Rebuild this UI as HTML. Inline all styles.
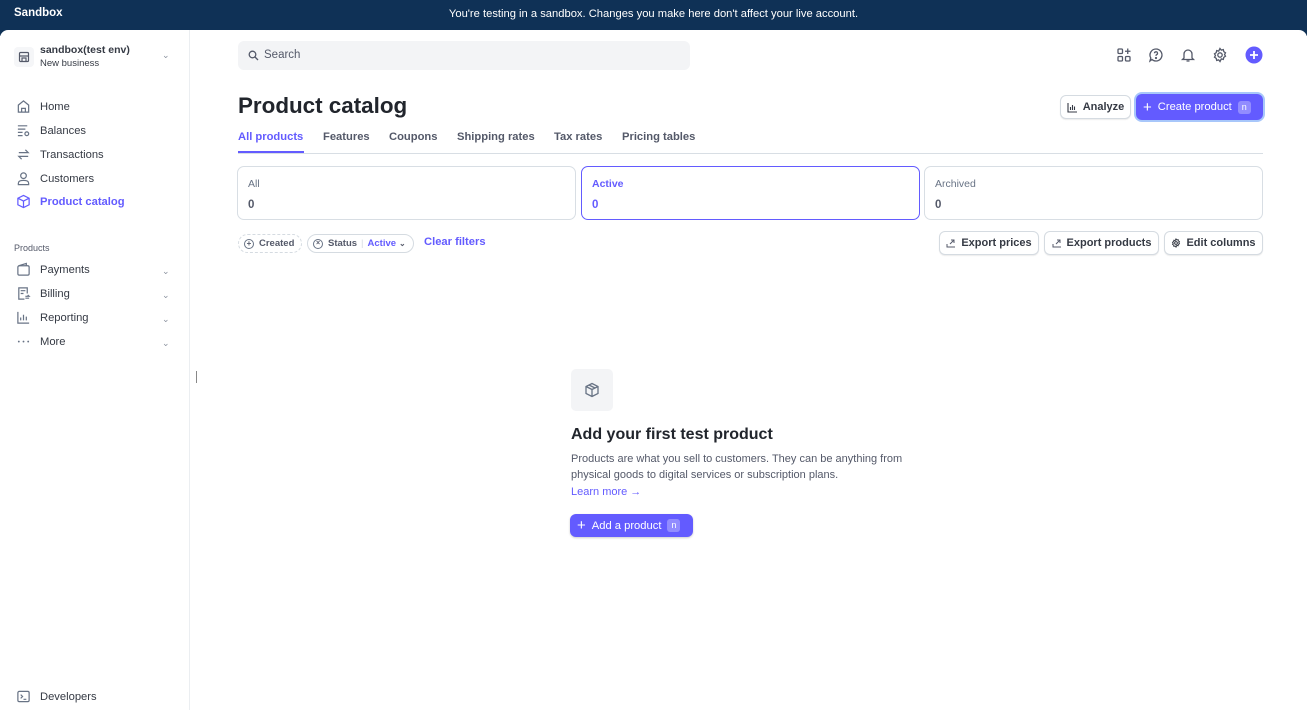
<!DOCTYPE html>
<html><head><meta charset="utf-8"><style>
*{box-sizing:border-box;margin:0;padding:0}
body{width:1307px;height:710px;overflow:hidden;font-family:"Liberation Sans",sans-serif;background:#fff;color:#353a44;position:relative;font-size:11px}
.top{position:absolute;left:0;top:0;width:1307px;height:36px;background:#0f3156}
.top .t{position:absolute;left:14px;top:7px;color:#fff;font-weight:bold;font-size:11.5px}
.top .m{position:absolute;left:0;width:1307px;top:8px;text-align:center;color:#fff;font-size:11.2px}
.main{position:absolute;left:0;top:30px;width:1307px;height:680px;background:#fff;border-radius:8px 8px 0 0}
.side{position:absolute;left:0;top:30px;width:190px;height:680px;border-right:1px solid #ebeef1}
.abs{position:absolute;white-space:nowrap}
.nav{position:absolute;left:16px;display:flex;align-items:center;font-size:11.2px;color:#353a44}
.nav svg{width:15px;height:15px;margin-right:9px;flex-shrink:0}
.chev{position:absolute;left:162px;color:#8a919e;font-size:9px}
.btn{position:absolute;height:24px;border:1px solid #d5dbe1;border-radius:6px;background:#fff;font-weight:bold;font-size:11px;display:flex;align-items:center;justify-content:center;white-space:nowrap;box-shadow:0 1px 1px rgba(0,0,0,.08);color:#353a44}
.btn svg{flex-shrink:0}
.card{position:absolute;top:166px;height:54px;border:1px solid #d8dee4;border-radius:7px;padding:11px 10px}
.card .l{font-size:10.5px;color:#687385}.card .v{font-size:11.5px;font-weight:bold;margin-top:9px;color:#545969}
.tab{position:absolute;top:131px;font-size:11.2px;font-weight:bold;color:#545969;white-space:nowrap}
.kbd{display:inline-block;width:13px;height:13px;border-radius:3px;background:rgba(255,255,255,.3);font-size:9px;text-align:center;line-height:13px;margin-left:6px}
</style></head><body>
<div class="top"><div class="t">Sandbox</div><div class="m">You're testing in a sandbox. Changes you make here don't affect your live account.</div></div>
<div class="main"></div>
<div class="side"></div>
<div class="abs" style="left:14px;top:47px;width:20px;height:20px;background:#f5f6f8;border-radius:4px"></div>
<svg class="abs" style="left:18px;top:51px" width="12" height="12" viewBox="0 0 12 12" fill="none" stroke="#545969" stroke-width="1.2"><rect x="1.5" y="1.5" width="9" height="9" rx="1"/><path d="M1.5 5h9M4 10V7h4v3"/></svg>
<div class="abs" style="left:40px;top:44px;font-size:10.5px;font-weight:bold">sandbox(test env)</div>
<div class="abs" style="left:40px;top:58px;font-size:9.5px">New business</div>
<div class="chev" style="top:50px">&#8964;</div>

<div class="nav" style="top:99px"><svg viewBox="0 0 16 16" fill="none" stroke="#687385" stroke-width="1.3"><path d="M2.5 14V6.5L8 2l5.5 4.5V14zM6 14v-4h4v4"/></svg>Home</div>
<div class="nav" style="top:123px"><svg viewBox="0 0 16 16" fill="none" stroke="#687385" stroke-width="1.3"><path d="M2 3h10M2 6.5h8M2 10h5M2 13.5h5"/><circle cx="11.5" cy="11.5" r="2"/></svg>Balances</div>
<div class="nav" style="top:147px"><svg viewBox="0 0 16 16" fill="none" stroke="#687385" stroke-width="1.3"><path d="M3 6h10l-3-3M13 10H3l3 3"/></svg>Transactions</div>
<div class="nav" style="top:171px"><svg viewBox="0 0 16 16" fill="none" stroke="#687385" stroke-width="1.3"><circle cx="8" cy="5" r="3"/><path d="M2.5 14.5v-1.5c0-2 2-3 5.5-3s5.5 1 5.5 3v1.5z"/></svg>Customers</div>
<div class="nav" style="top:194px;color:#635bff;font-weight:bold"><svg viewBox="0 0 16 16" fill="none" stroke="#635bff" stroke-width="1.3"><path d="M8 1.5l6 3v7l-6 3-6-3v-7zM2 4.5l6 3 6-3M8 7.5v7"/></svg>Product catalog</div>
<div class="abs" style="left:14px;top:243px;font-size:9px;color:#545969">Products</div>
<div class="nav" style="top:262px"><svg viewBox="0 0 16 16" fill="none" stroke="#687385" stroke-width="1.3"><rect x="2" y="4" width="12" height="10" rx="1.5"/><path d="M3 4l8-2.5V4"/></svg>Payments</div><div class="chev" style="top:266px">&#8964;</div>
<div class="nav" style="top:286px"><svg viewBox="0 0 16 16" fill="none" stroke="#687385" stroke-width="1.3"><path d="M9 14H3V2h9v6M5 5h5M5 8h3"/><path d="M10 11h4l-1.5-1.5M14 13h-4"/></svg>Billing</div><div class="chev" style="top:290px">&#8964;</div>
<div class="nav" style="top:310px"><svg viewBox="0 0 16 16" fill="none" stroke="#687385" stroke-width="1.3"><path d="M2 2v12h12M5 11V8M8 11V5M11 11V7"/></svg>Reporting</div><div class="chev" style="top:314px">&#8964;</div>
<div class="nav" style="top:334px"><svg viewBox="0 0 16 16" fill="#687385"><circle cx="3" cy="8" r="1"/><circle cx="8" cy="8" r="1"/><circle cx="13" cy="8" r="1"/></svg>More</div><div class="chev" style="top:338px">&#8964;</div>
<div class="nav" style="top:689px"><svg viewBox="0 0 16 16" fill="none" stroke="#687385" stroke-width="1.3"><rect x="2" y="2.5" width="12" height="11" rx="1.5"/><path d="M5 6l2 2-2 2M8 11h3"/></svg>Developers</div>
<div class="abs" style="left:196px;top:371px;width:1px;height:12px;background:#888"></div>

<div class="abs" style="left:238px;top:41px;width:452px;height:29px;background:#f3f4f6;border-radius:6px"></div>
<svg class="abs" style="left:248px;top:50px" width="11" height="11" viewBox="0 0 11 11" fill="none" stroke="#545969" stroke-width="1.3"><circle cx="4.5" cy="4.5" r="3.3"/><path d="M7 7l3 3"/></svg>
<div class="abs" style="left:264px;top:49px;font-size:11.5px;color:#545969">Search</div>
<svg class="abs" style="left:1116px;top:47px" width="16" height="16" viewBox="0 0 16 16" fill="none" stroke="#545969" stroke-width="1.3"><rect x="2" y="2" width="4.5" height="4.5" rx="1"/><rect x="2" y="9.5" width="4.5" height="4.5" rx="1"/><rect x="9.5" y="9.5" width="4.5" height="4.5" rx="1"/><path d="M11.75 1.5v5.5M9 4.25h5.5"/></svg>
<svg class="abs" style="left:1148px;top:47px" width="16" height="16" viewBox="0 0 16 16" fill="none" stroke="#545969" stroke-width="1.3"><path d="M8 2a6 6 0 1 1-4 10.5L2 14l.8-3A6 6 0 0 1 8 2z"/><path d="M6.5 6.3a1.5 1.5 0 1 1 2 1.4c-.5.2-.5.6-.5 1.2"/><circle cx="8" cy="11" r=".5" fill="#545969"/></svg>
<svg class="abs" style="left:1180px;top:47px" width="16" height="16" viewBox="0 0 16 16" fill="none" stroke="#545969" stroke-width="1.3"><path d="M4 11V7a4 4 0 0 1 8 0v4l1.5 1.5h-11zM6.5 14h3"/></svg>
<svg class="abs" style="left:1212px;top:47px" width="16" height="16" viewBox="0 0 16 16" fill="none" stroke="#545969" stroke-width="1.3"><circle cx="8" cy="8" r="2.2"/><path d="M8 1.5l1.3 1.6 2-.5.5 2 1.7 1.2-1 1.7 1 1.7-1.7 1.2-.5 2-2-.5L8 14.5l-1.3-1.6-2 .5-.5-2-1.7-1.2 1-1.7-1-1.7 1.7-1.2.5-2 2 .5z"/></svg>
<svg class="abs" style="left:1245px;top:46px" width="18" height="18" viewBox="0 0 18 18"><circle cx="9" cy="9" r="8.5" fill="#635bff"/><path d="M9 5v8M5 9h8" stroke="#fff" stroke-width="1.8"/></svg>

<div class="abs" style="left:238px;top:93px;font-size:22.4px;font-weight:bold;color:#21252c">Product catalog</div>
<div class="btn" style="left:1060px;top:95px;width:71px"><svg width="11" height="11" viewBox="0 0 11 11" fill="none" stroke="#353a44" stroke-width="1.1" style="margin-right:5px"><path d="M1 1v9h9M3.5 8V5M5.5 8V3M7.5 8V4.5"/></svg>Analyze</div>
<div class="abs" style="left:1136px;top:94px;width:127px;height:26px;border-radius:6px;background:#635bff;box-shadow:0 0 0 2px #a8c7fa;color:#fff;font-size:11.2px;display:flex;align-items:center;padding-left:7px"><span style="font-size:15px;margin-right:6px;line-height:1">+</span>Create product<span class="kbd">n</span></div>

<div class="tab" style="left:238px;color:#635bff">All products</div>
<div class="abs" style="left:238px;top:151px;width:66px;height:2px;background:#635bff"></div>
<div class="tab" style="left:323px">Features</div>
<div class="tab" style="left:389px">Coupons</div>
<div class="tab" style="left:457px">Shipping rates</div>
<div class="tab" style="left:554px">Tax rates</div>
<div class="tab" style="left:622px">Pricing tables</div>
<div class="abs" style="left:238px;top:153px;width:1025px;height:1px;background:#d8dee4"></div>

<div class="card" style="left:237px;width:339px"><div class="l">All</div><div class="v">0</div></div>
<div class="card" style="left:581px;width:339px;border-color:#635bff"><div class="l" style="color:#635bff;font-weight:bold">Active</div><div class="v" style="color:#635bff">0</div></div>
<div class="card" style="left:924px;width:339px"><div class="l">Archived</div><div class="v">0</div></div>

<div class="abs" style="left:238px;top:234px;width:64px;height:19px;border:1px dashed #d5dbe1;border-radius:10px;font-size:9.5px;font-weight:bold;display:flex;align-items:center;padding-left:5px;color:#545969"><span style="display:inline-block;width:10px;height:10px;border:1px solid #687385;border-radius:50%;font-size:8px;line-height:8px;text-align:center;margin-right:5px">+</span>Created</div>
<div class="abs" style="left:307px;top:234px;width:107px;height:19px;border:1px solid #d5dbe1;border-radius:10px;font-size:9.5px;font-weight:bold;display:flex;align-items:center;padding-left:5px;color:#545969"><span style="display:inline-block;width:10px;height:10px;border:1px solid #687385;border-radius:50%;font-size:7px;line-height:8px;text-align:center;margin-right:5px">×</span>Status<span style="color:#d5dbe1;margin:0 4px;font-weight:normal">|</span><span style="color:#635bff">Active</span><span style="font-size:8px;margin-left:3px">&#8964;</span></div>
<div class="abs" style="left:424px;top:236px;font-size:11.2px;font-weight:bold;color:#635bff">Clear filters</div>

<div class="btn" style="left:939px;top:231px;width:100px"><svg width="10" height="10" viewBox="0 0 10 10" fill="none" stroke="#545969" stroke-width="1" style="margin-right:5px"><path d="M1 6v3h8M4 6l4-4M5 2h3v3"/></svg>Export prices</div>
<div class="btn" style="left:1044px;top:231px;width:115px"><svg width="10" height="10" viewBox="0 0 10 10" fill="none" stroke="#545969" stroke-width="1" style="margin-right:5px"><path d="M1 6v3h8M4 6l4-4M5 2h3v3"/></svg>Export products</div>
<div class="btn" style="left:1164px;top:231px;width:99px"><svg width="10" height="10" viewBox="0 0 16 16" fill="none" stroke="#353a44" stroke-width="1.6" style="margin-right:5px"><circle cx="8" cy="8" r="2.2"/><path d="M8 1.5l1.3 1.6 2-.5.5 2 1.7 1.2-1 1.7 1 1.7-1.7 1.2-.5 2-2-.5L8 14.5l-1.3-1.6-2 .5-.5-2-1.7-1.2 1-1.7-1-1.7 1.7-1.2.5-2 2 .5z"/></svg>Edit columns</div>

<div class="abs" style="left:571px;top:369px;width:42px;height:42px;background:#f3f4f6;border-radius:5px"></div>
<svg class="abs" style="left:584px;top:382px" width="16" height="16" viewBox="0 0 16 16" fill="none" stroke="#687385" stroke-width="1.3"><path d="M8 1.5l6 3v7l-6 3-6-3v-7zM2 4.5l6 3 6-3M8 7.5v7M5 3l6 3"/></svg>
<div class="abs" style="left:571px;top:426px;font-size:16px;font-weight:bold;color:#21252c">Add your first test product</div>
<div class="abs" style="left:571px;top:451px;font-size:11px;line-height:16px;color:#545969;width:345px;white-space:normal">Products are what you sell to customers. They can be anything from physical goods to digital services or subscription plans.</div>
<div class="abs" style="left:571px;top:486px;font-size:11px;color:#635bff">Learn more →</div>
<div class="abs" style="left:570px;top:514px;width:123px;height:23px;border-radius:6px;background:#635bff;color:#fff;font-size:11.2px;display:flex;align-items:center;padding-left:7px;box-shadow:0 1px 2px rgba(0,0,0,.2)"><span style="font-size:15px;margin-right:6px;line-height:1">+</span>Add a product<span class="kbd">n</span></div>
</body></html>
